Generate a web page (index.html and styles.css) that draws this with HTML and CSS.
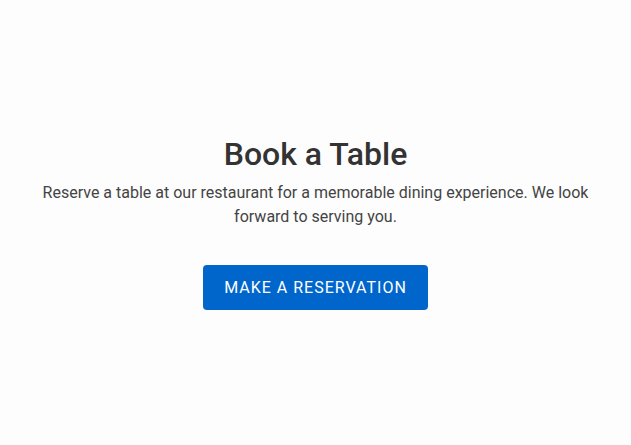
FILE: index.html
```html
<!DOCTYPE html>
<html lang="en">
<head>
<meta charset="utf-8">
<title>Book a Table</title>
<link rel="stylesheet" href="styles.css">
</head>
<body>
<main class="page">
  <section class="booking">
    <h1 class="booking__title">Book a Table</h1>
    <p class="booking__text">Reserve a table at our restaurant for a memorable dining experience. We look forward to serving you.</p>
    <a class="booking__button" href="#">Make a Reservation</a>
  </section>
</main>
</body>
</html>
```

FILE: styles.css
```css
* { box-sizing: border-box; }
html, body { margin: 0; padding: 0; }
body {
  font-family: Roboto, "Liberation Sans", sans-serif;
  background: #fdfdfd;
  color: #333;
}
.page {
  min-height: 100vh;
  display: flex;
  align-items: center;
  justify-content: center;
}
.booking {
  max-width: 600px;
  padding: 20px;
  text-align: center;
}
.booking__title {
  font-size: 32px;
  font-weight: 500;
  margin: 0 0 8px;
  color: #333;
  line-height: 1.2;
}
.booking__text {
  font-size: 16px;
  line-height: 24px;
  margin: 0 0 36px;
  color: #444;
}
.booking__button {
  display: inline-block;
  background: #0066cc;
  color: #fff;
  text-decoration: none;
  text-transform: uppercase;
  font-size: 16px;
  letter-spacing: 1px;
  padding: 12px 21px;
  border-radius: 4px;
  line-height: 21px;
}
```
